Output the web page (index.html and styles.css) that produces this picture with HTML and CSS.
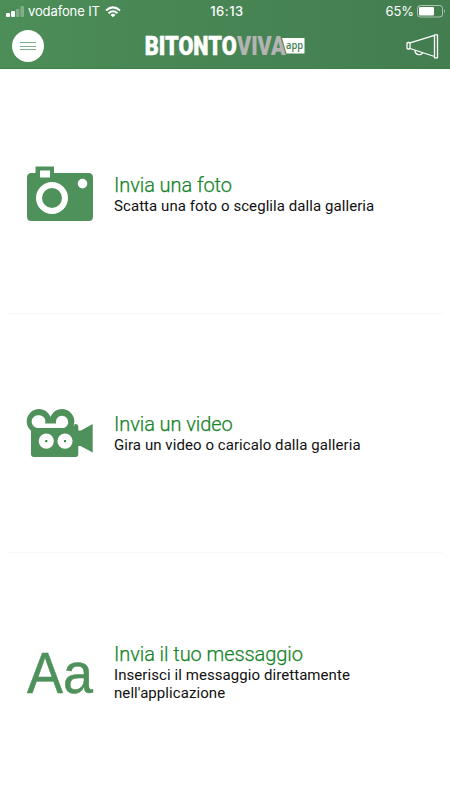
FILE: index.html
```html
<!DOCTYPE html>
<html lang="it">
<head>
<meta charset="utf-8">
<title>BitontoViva</title>
<link rel="stylesheet" href="styles.css">
</head>
<body>
<header class="header">
  <div class="status">
    <div class="carrier">
      <svg width="18" height="12" viewBox="0 0 18 12" fill="#fff"><rect y="7" width="4" height="4" rx="1"/><rect x="5" y="5" width="4" height="6" rx="1"/><g opacity=".3"><rect x="9.8" y="3" width="3.6" height="8" rx="1"/><rect x="14.4" y="0" width="3.6" height="11" rx="1"/></g></svg>
      <span class="operator">vodafone IT</span>
      <svg width="16" height="12" viewBox="0 0 16 12" fill="none" stroke="#fff" stroke-width="2"><path d="M1 4.500Q8-1.800 15 4.500M3.500 7.200Q8 3.300 12.500 7.200"/><path d="M5.500 8.900Q8 6.800 10.500 8.900L8 11.300Z" fill="#fff" stroke="none"/></svg>
    </div>
    <span class="clock">16:13</span>
    <div class="battery">
      <span>65%</span>
      <svg width="29" height="13" viewBox="0 0 29 13"><rect x=".5" y=".5" width="25" height="11.500" rx="2.800" fill="none" stroke="#fff" stroke-opacity=".55"/><rect x="2" y="2" width="15" height="8.500" rx="1" fill="#fff"/><path d="M27 4.500q2 1.700 0 3.500Z" fill="#fff" opacity=".55"/></svg>
    </div>
  </div>
  <div class="bar">
    <button class="menu" aria-label="Menu"><svg width="16" height="10" viewBox="0 0 16 10"><path d="M0 1.500H16M0 5.500H16M0 8.500H16" stroke="#83ad8a"/></svg></button>
    <svg class="logo" width="160" height="30" viewBox="0 0 160 30">
      <text class="brand" x="-.3" y="24" textLength="92" lengthAdjust="spacingAndGlyphs">BITONTO</text>
      <text class="brand viva" x="92" y="24" textLength="48.500" lengthAdjust="spacingAndGlyphs">VIVA</text>
      <path d="M137 7H159.500V22.500H141.500Z" fill="#fff"/>
      <text class="app" x="141" y="17.500" textLength="17" lengthAdjust="spacingAndGlyphs">app</text>
    </svg>
    <svg class="horn" width="33" height="25" viewBox="0 0 33 25" fill="none" stroke="#fff" stroke-width="1.300" stroke-linejoin="round"><rect x="1" y="8.500" width="3" height="6.500" rx="1"/><path d="M4 8.800L28.500 1.300V22.500L4 14.500M28.500 .8H31.500V23.800H28.500ZM9 16.200C9 21.500 16 21.800 16.500 18.600"/></svg>
  </div>
</header>
<main class="options">
  <section class="option">
    <svg class="icon" width="68" height="56" viewBox="0 0 68 56"><path fill="#4e915b" fill-rule="evenodd" d="M9.500 7V.5H28V7H62.500Q67 7 67 11.500V50.500Q67 55 62.500 55H5.500Q1 55 1 50.500V11.500Q1 7 5.500 7ZM14 4.500V11.500H24V4.500ZM26 16A16 16 0 1 0 26 48A16 16 0 1 0 26 16ZM26 22A10 10 0 1 1 26 42A10 10 0 1 1 26 22ZM56.500 12.800A4.800 4.800 0 1 0 56.500 22.400A4.800 4.800 0 1 0 56.500 12.800Z"/></svg>
    <div class="copy"><h2>Invia una foto</h2><p>Scatta una foto o sceglila dalla galleria</p></div>
  </section>
  <section class="option">
    <svg class="icon" width="68" height="50" viewBox="0 0 68 50"><g transform="translate(0 .6)"><g fill="#4e915b"><circle cx="13" cy="12.800" r="12.300"/><circle cx="36" cy="12.800" r="12.300"/><path d="M5 17H48.500V15.300H50Q52 15.300 52.300 18V21.800H55L66.700 15.300V44L54.500 37.300H52.300V45.500Q52.300 48.500 49.500 48.500H8Q5 48.500 5 45.500ZM17 11H31V18H17Z"/></g><path fill="#fff" d="M13 6.700A6.200 6.200 0 0 1 19 15H30A6.200 6.200 0 1 1 38 19.300H11A6.200 6.200 0 0 1 13 6.700Z"/><g fill="#fff"><circle cx="20.300" cy="32.500" r="7.600"/><circle cx="39" cy="32.500" r="7.600"/></g><g fill="#23833b"><circle cx="20.300" cy="32.500" r="1.200"/><circle cx="39" cy="32.500" r="1.200"/></g></g></svg>
    <div class="copy"><h2>Invia un video</h2><p>Gira un video o caricalo dalla galleria</p></div>
  </section>
  <section class="option">
    <svg class="icon" width="70" height="70" viewBox="0 0 70 70"><text class="letters" x="1" y="54.500" textLength="66" lengthAdjust="spacingAndGlyphs">Aa</text></svg>
    <div class="copy copy-long"><h2>Invia il tuo messaggio</h2><p>Inserisci il messaggio direttamente<br>nell'applicazione</p></div>
  </section>
</main>
</body>
</html>
```
FILE: styles.css
```css
* { box-sizing: border-box; }
body { margin: 0; height: 800px; background: #fff; overflow: hidden; font-family: Roboto, sans-serif; }
svg { display: block; flex: none; }
.header { height: 69px; background: linear-gradient(90deg, #4c8d58, #437d50); border-bottom: 1px solid #398147; color: #fff; }
.status { height: 23px; display: grid; grid-template-columns: 1fr auto 1fr; align-items: center; padding: 0 4px 0 6px; font: 13px/23px Inter, sans-serif; }
.carrier, .battery { display: flex; align-items: center; }
.carrier { gap: 4px; }
.operator { letter-spacing: -.12px; margin-right: 1px; }
.clock { font-weight: 500; letter-spacing: .5px; position: relative; left: 1px; }
.battery { justify-content: flex-end; gap: 3px; letter-spacing: -.1px; }
.bar { height: 46px; display: flex; align-items: center; justify-content: space-between; padding: 0 11px 0 12px; }
.menu { width: 32px; height: 32px; border: 0; border-radius: 50%; padding: 0; background: #fff; display: grid; place-items: center; }
.brand { font: 900 25px Roboto, sans-serif; fill: #fff; stroke: #fff; stroke-width: .5px; }
.viva { fill: #b4b4b4; stroke: #b4b4b4; stroke-width: .2px; }
.app { font: 600 11.5px "Open Sans", sans-serif; fill: #437d50; }
.options { padding: 6px 7px 0 8px; }
.option { height: 239px; border-bottom: 1px solid #f8f8f8; display: flex; align-items: center; padding-left: 18px; gap: 20px; }
.option:last-child { border-bottom: 0; }
.copy { color: #111; }
.copy-long { margin-left: -2px; }
h2 { margin: 0; font-size: 20px; line-height: 23px; font-weight: 300; color: #168329; letter-spacing: -.07px; -webkit-text-stroke: .25px #168329; }
p { margin: 0; font-size: 15px; line-height: 18px; letter-spacing: .07px; }
.letters { font: 57px "Liberation Sans", sans-serif; fill: #4e915b; stroke: #4e915b; stroke-width: .5px; }
```
